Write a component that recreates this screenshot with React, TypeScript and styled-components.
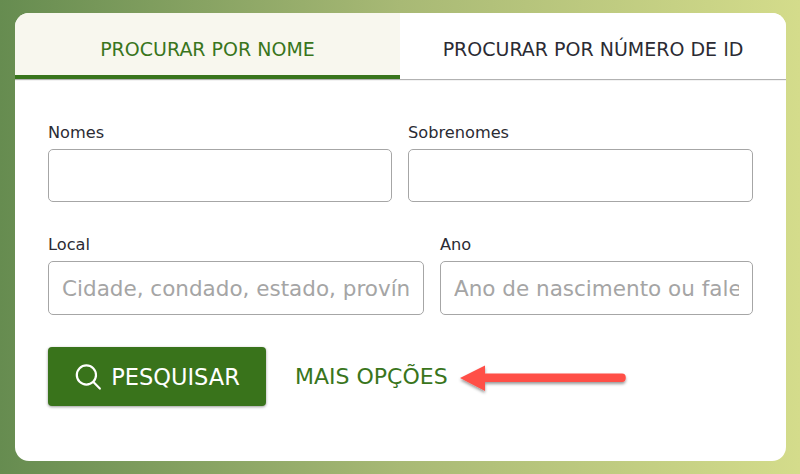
import React, { useState } from 'react';
import styled, { createGlobalStyle } from 'styled-components';

const GlobalStyle = createGlobalStyle`
  html, body {
    margin: 0;
    padding: 0;
  }

  body {
    font-family: 'DejaVu Sans', Verdana, sans-serif;
  }
`;

const SearchIcon = () => (
  <svg width="28" height="28" viewBox="0 0 28 28" fill="none" stroke="#fff" strokeWidth="2.2" strokeLinecap="round">
    <circle cx="12.4" cy="12" r="9.6" />
    <path d="M19.4 19l6.4 6.6" />
  </svg>
);

const App = () => {
  const [activeTab, setActiveTab] = useState('name');

  return (
    <Page>
      <GlobalStyle />
      <Card>
        <Tabs>
          <Tab $active={activeTab === 'name'} onClick={() => setActiveTab('name')}>
            PROCURAR POR NOME
          </Tab>
          <Tab $active={activeTab === 'id'} onClick={() => setActiveTab('id')}>
            PROCURAR POR NÚMERO DE ID
          </Tab>
        </Tabs>

        <Form onSubmit={(e) => e.preventDefault()}>
          <NameRow>
            <Field>
              <Label>Nomes</Label>
              <Input />
            </Field>
            <Field>
              <Label>Sobrenomes</Label>
              <Input />
            </Field>
          </NameRow>

          <PlaceRow>
            <Field>
              <Label>Local</Label>
              <Input $tall placeholder="Cidade, condado, estado, província ou país" />
            </Field>
            <Field>
              <Label>Ano</Label>
              <Input $tall placeholder="Ano de nascimento ou falecimento" />
            </Field>
          </PlaceRow>

          <Actions>
            <SearchButton type="submit">
              <SearchIcon />
              PESQUISAR
            </SearchButton>
            <MoreLink>MAIS OPÇÕES</MoreLink>
            <Arrow width="172" height="40" viewBox="0 0 172 40">
              <defs>
                <filter id="arrow-shadow" x="-10%" y="-30%" width="120%" height="170%">
                  <feDropShadow dx="0" dy="2" stdDeviation="1.6" floodColor="#000" floodOpacity="0.4" />
                </filter>
              </defs>
              <path
                d="M2 18L27 5.5V13.5H164a3.8 4.2 0 0 1 0 8.4H27V31z"
                fill="#ff4f46"
                filter="url(#arrow-shadow)"
              />
            </Arrow>
          </Actions>
        </Form>
      </Card>
    </Page>
  );
};

export default App;

const Page = styled.div`
  box-sizing: border-box;
  width: 800px;
  height: 474px;
  padding: 13px 14px 13px 15px;
  background: linear-gradient(90deg, #668c50 0%, #a8b975 50%, #d4dc8b 100%);
  overflow: hidden;
`;

const Card = styled.div`
  height: 448px;
  background-color: #fff;
  border-radius: 14px;
  overflow: hidden;
`;

const Tabs = styled.div`
  display: grid;
  grid-template-columns: 385px 1fr;
  height: 66px;
  box-shadow: 0 1px 1px rgba(0, 0, 0, 0.3);
`;

const Tab = styled.button<{ $active: boolean }>`
  padding: 10px 0 0;
  border: none;
  border-bottom: 4px solid ${(p) => (p.$active ? '#39751c' : 'transparent')};
  background-color: ${(p) => (p.$active ? '#f8f7ee' : '#fff')};
  color: ${(p) => (p.$active ? '#39751c' : '#2b2b33')};
  font-family: inherit;
  font-size: 19px;
  cursor: pointer;
`;

const Form = styled.form`
  display: flex;
  flex-direction: column;
  padding: 45px 33px 0;
`;

const NameRow = styled.div`
  display: grid;
  grid-template-columns: 344px 345px;
  gap: 16px;
  margin-bottom: 34px;
`;

const PlaceRow = styled.div`
  display: grid;
  grid-template-columns: 376px 313px;
  gap: 16px;
  margin-bottom: 32px;
`;

const Field = styled.div`
  display: flex;
  flex-direction: column;
`;

const Label = styled.label`
  height: 25px;
  color: #2b2b33;
  font-size: 16.2px;
  line-height: 17px;
`;

const Input = styled.input<{ $tall?: boolean }>`
  box-sizing: border-box;
  width: 100%;
  height: ${(p) => (p.$tall ? '54px' : '53px')};
  padding: 0 13px;
  border: 1px solid #a6a6a6;
  border-radius: 5px;
  background-color: #fff;
  font-family: inherit;
  font-size: 21.5px;

  &::placeholder {
    color: #a5a5a5;
    opacity: 1;
  }
`;

const Actions = styled.div`
  position: relative;
  display: flex;
  align-items: center;
  gap: 29px;
`;

const SearchButton = styled.button`
  display: flex;
  align-items: center;
  justify-content: center;
  gap: 9px;
  width: 218px;
  height: 59px;
  padding: 0;
  border: none;
  border-radius: 4px;
  background-color: #39731b;
  box-shadow: 0 1px 3px rgba(0, 0, 0, 0.4);
  color: #fff;
  font-family: inherit;
  font-size: 22.5px;
  cursor: pointer;
`;

const MoreLink = styled.a`
  color: #39751c;
  font-size: 22px;
  cursor: pointer;
`;

const Arrow = styled.svg`
  position: absolute;
  left: 410px;
  top: 13px;
`;
